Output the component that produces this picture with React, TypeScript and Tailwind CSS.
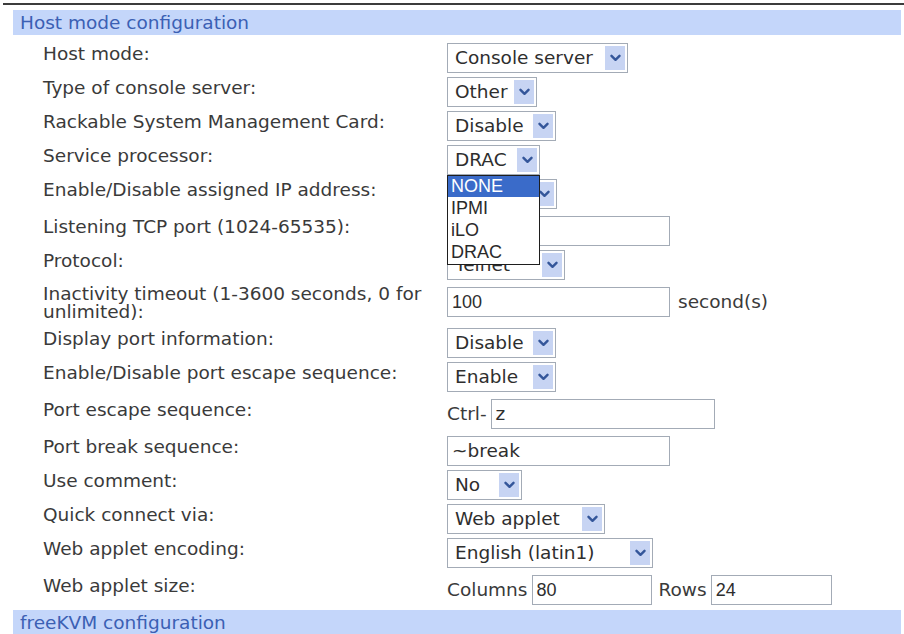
import React from 'react'

// Chevron shown inside the blue arrow button of a select
function Chevron() {
  return (
    <svg width="11" height="8" viewBox="0 0 11 8" className="block">
      <path d="M1.5 1.8 L5.5 5.8 L9.5 1.8" fill="none" stroke="#34569a" strokeWidth="2.4" strokeLinecap="round" strokeLinejoin="round" />
    </svg>
  )
}

function Select({ value, w, children }: { value: string; w: string; children?: React.ReactNode }) {
  return (
    <div className={`relative inline-flex items-center h-[30px] border border-[#a3abb6] bg-white ${w}`}>
      <span className="pl-[7px] flex-1 whitespace-nowrap text-[#2e2e2e] leading-none">{value}</span>
      <span className="w-[20px] h-[24px] mr-[2px] bg-[#c7d4f3] flex items-center justify-center">
        <Chevron />
      </span>
      {children}
    </div>
  )
}

function Input({ value, w, mono }: { value?: string; w: string; mono?: boolean }) {
  return (
    <div className={`inline-flex items-center h-[30px] border border-[#a3abb6] bg-white ${w}`}>
      <span className={`pl-[4px] whitespace-nowrap text-[#2e2e2e] leading-none ${mono ? "font-['Liberation_Sans',Arial,sans-serif] text-[18px]" : ''}`}>
        {value}
      </span>
    </div>
  )
}

function Row({ label, h, children, labelClass = 'mt-[2px]' }: { label: string; h: string; children: React.ReactNode; labelClass?: string }) {
  return (
    <div className={`flex items-start ${h}`}>
      <div className={`w-[434px] shrink-0 pl-[30px] pr-[8px] leading-[18px] text-[#3a3a3a] ${labelClass}`}>{label}</div>
      <div className="flex items-center">{children}</div>
    </div>
  )
}

function Band({ title }: { title: string }) {
  return (
    <div className="h-[25px] bg-[#c4d6fa] pl-[7px] leading-[25px] text-[#3b60b4] whitespace-nowrap">{title}</div>
  )
}

export default function App() {
  return (
    <div className="min-h-screen bg-white font-['DejaVu_Sans','Verdana',sans-serif] text-[18.5px] overflow-hidden">
      <div className="h-[2px] bg-[#3c3c3c] ml-[3px] mt-[3px]" />
      <div className="ml-[13px] mr-[3px] mt-[5px]">
        <Band title="Host mode configuration" />
        <div className="pt-[8px]">
          <Row label="Host mode:" h="h-[34px]">
            <Select value="Console server" w="w-[181px]" />
          </Row>
          <Row label="Type of console server:" h="h-[34px]">
            <Select value="Other" w="w-[90px]" />
          </Row>
          <Row label="Rackable System Management Card:" h="h-[34px]">
            <Select value="Disable" w="w-[109px]" />
          </Row>
          <Row label="Service processor:" h="h-[34px]">
            <Select value="DRAC" w="w-[93px]">
              {/* open option list */}
              <div className="absolute z-10 left-[-1px] top-[29px] w-[93px] border border-[#1e1e1e] bg-white font-['Liberation_Sans',Arial,sans-serif] text-[18px] text-[#2a2a2a]">
                <div className="h-[21px] leading-[21px] pl-[3px] bg-[#3a6bc9] text-white">NONE</div>
                <div className="h-[22px] leading-[22px] pl-[3px]">IPMI</div>
                <div className="h-[22px] leading-[22px] pl-[3px]">iLO</div>
                <div className="h-[23px] leading-[22px] pl-[3px]">DRAC</div>
              </div>
            </Select>
          </Row>
          <Row label="Enable/Disable assigned IP address:" h="h-[37px]">
            <Select value="Disable" w="w-[110px]" />
          </Row>
          <Row label="Listening TCP port (1024-65535):" h="h-[34px]">
            <Input w="w-[223px]" />
          </Row>
          <Row label="Protocol:" h="h-[37px]">
            <Select value="Telnet" w="w-[118px]" />
          </Row>
          <Row label="Inactivity timeout (1-3600 seconds, 0 for unlimited):" h="h-[41px]" labelClass="mt-[-2px]">
            <Input value="100" w="w-[223px]" mono />
            <span className="ml-[8px] text-[#3a3a3a] whitespace-nowrap">second(s)</span>
          </Row>
          <Row label="Display port information:" h="h-[34px]">
            <Select value="Disable" w="w-[109px]" />
          </Row>
          <Row label="Enable/Disable port escape sequence:" h="h-[37px]">
            <Select value="Enable" w="w-[109px]" />
          </Row>
          <Row label="Port escape sequence:" h="h-[37px]">
            <span className="mr-[4px] text-[#3a3a3a]">Ctrl-</span>
            <Input value="z" w="w-[224px]" />
          </Row>
          <Row label="Port break sequence:" h="h-[34px]">
            <Input value="~break" w="w-[223px]" />
          </Row>
          <Row label="Use comment:" h="h-[34px]">
            <Select value="No" w="w-[75px]" />
          </Row>
          <Row label="Quick connect via:" h="h-[34px]">
            <Select value="Web applet" w="w-[158px]" />
          </Row>
          <Row label="Web applet encoding:" h="h-[37px]">
            <Select value="English (latin1)" w="w-[206px]" />
          </Row>
          <Row label="Web applet size:" h="h-[35px]">
            <span className="mr-[4px] text-[#3a3a3a]">Columns</span>
            <Input value="80" w="w-[120px]" mono />
            <span className="ml-[7px] mr-[4px] text-[#3a3a3a]">Rows</span>
            <Input value="24" w="w-[121px]" mono />
          </Row>
        </div>
        <Band title="freeKVM configuration" />
      </div>
    </div>
  )
}
